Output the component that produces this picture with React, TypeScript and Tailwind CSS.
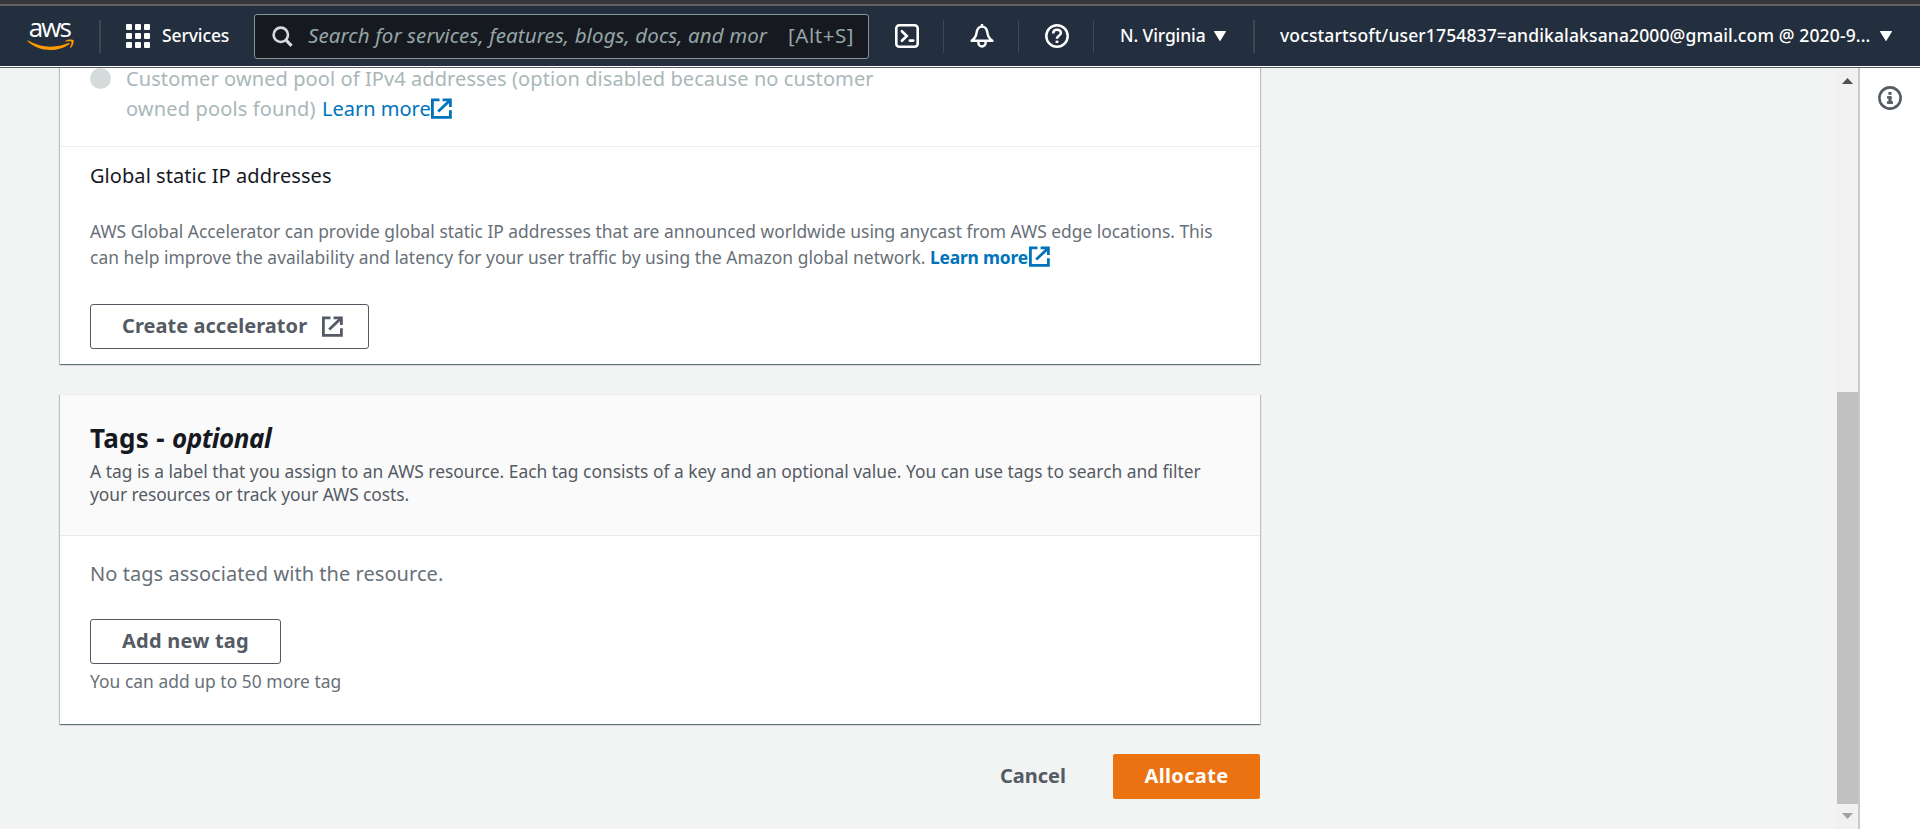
import React from 'react';

function ExternalIcon({ className = '' }: { className?: string }) {
  return (
    <svg viewBox="0 0 21 21" className={`h-[21px] w-[21px] shrink-0 ${className}`} fill="none" stroke="currentColor" strokeWidth="2.8">
      <path d="M8.5 1.9H1.4V19.4H19.4V12.2" />
      <path d="M11.6 1.9H19.4V9" />
      <path d="M7.2 13.6L18.8 2.4" />
    </svg>
  );
}

function AwsLogo() {
  return (
    <svg viewBox="0 0 47 28" className="h-[28px] w-[47px] shrink-0 overflow-visible">
      <text x="1.8" y="15" fill="#ffffff" textLength="43" fontFamily="'Open Sans', 'Noto Sans', sans-serif" fontSize="26" fontWeight="500">
        aws
      </text>
      <g transform="scale(0.1546)" fill="#ff9900">
        <path d="M273.5,143.7c-32.9,24.3-80.7,37.2-121.8,37.2c-57.6,0-109.5-21.3-148.7-56.7c-3.1-2.8-0.3-6.6,3.4-4.4c42.4,24.6,94.7,39.5,148.8,39.5c36.5,0,76.6-7.6,113.5-23.2C274.2,133.6,278.9,139.7,273.5,143.7z" />
        <path d="M287.2,128.1c-4.2-5.4-27.8-2.6-38.5-1.3c-3.2,0.4-3.7-2.4-0.8-4.5c18.8-13.2,49.7-9.4,53.3-5c3.6,4.5-1,35.4-18.6,50.2c-2.7,2.3-5.3,1.1-4.1-1.9C282.5,155.7,291.4,133.4,287.2,128.1z" />
      </g>
    </svg>
  );
}

function GridIcon() {
  return (
    <svg viewBox="0 0 24 24" className="h-6 w-6 shrink-0" fill="#ffffff">
      {[0, 9, 18].map((y) => [0, 9, 18].map((x) => <rect key={`${x}-${y}`} x={x} y={y} width="6" height="6" rx="1" />))}
    </svg>
  );
}

function Caret() {
  return (
    <svg viewBox="0 0 12 10" className="h-[10px] w-3 shrink-0">
      <path d="M0.5 0h11a.5.5 0 0 1 .4.8L6.4 9.7a.5.5 0 0 1-.8 0L.1.8A.5.5 0 0 1 .5 0z" fill="#ffffff" />
    </svg>
  );
}

function Header() {
  return (
    <header className="flex h-[60px] shrink-0 items-center bg-[#232f3e] text-[17.5px] font-medium text-white">
      <div className="flex w-[99px] pl-[27px]">
        <AwsLogo />
      </div>
      <div className="h-[33px] w-0.5 bg-[#414750]" />
      <div className="flex w-[153px] items-center pl-[25px]">
        <GridIcon />
        <span className="pb-0.5 pl-3 tracking-[-0.12px]">Services</span>
      </div>
      <div className="flex h-[45px] w-[615px] items-center overflow-hidden rounded-[3px] border border-[#879596] bg-[#16191f] pl-[17px] text-[20.5px] font-normal text-[#95a5a6]">
        <svg viewBox="0 0 21 21" className="h-[21px] w-[21px] shrink-0" fill="none" stroke="#d5dbdb" strokeWidth="2.6">
          <circle cx="8.8" cy="8.8" r="7.2" />
          <path d="M13.8 13.8L19.6 19.8" strokeWidth="3.2" />
        </svg>
        <span className="ml-[15px] w-[460px] shrink-0 pb-0.5 whitespace-nowrap tracking-[0.1px] italic">
          Search for services, features, blogs, docs, and mor
        </span>
        <span className="ml-[20px] pb-0.5 whitespace-nowrap tracking-[0.55px]">[Alt+S]</span>
      </div>
      <div className="flex w-[74px] pl-[26px]">
        <svg viewBox="0 0 24 24" className="h-6 w-6" fill="none" stroke="#ffffff" strokeWidth="2.6">
          <rect x="1.3" y="1.3" width="21.4" height="21.4" rx="3" />
          <path d="M6.9 7.2L11.8 12L6.9 16.8" strokeLinecap="round" />
          <path d="M14.8 16.6H18.2" strokeLinecap="round" />
        </svg>
      </div>
      <div className="h-[33px] w-px bg-[#414750]" />
      <div className="flex w-[74px] justify-center pl-px">
        <svg viewBox="0 0 24 24" className="h-6 w-6" fill="none" stroke="#ffffff" strokeWidth="2.4" strokeLinejoin="round">
          <path d="M1.6 16.8C4.2 15 6 12.8 6.6 8.8C7.1 5 9 2.6 12 2.6S16.9 5 17.4 8.8C18 12.8 19.8 15 22.4 16.8Z" />
          <path d="M12 0.6V2.4" strokeLinecap="round" />
          <path d="M8.4 17.4V18.9a3.6 3.6 0 0 0 7.2 0V17.4" />
        </svg>
      </div>
      <div className="h-[33px] w-px bg-[#414750]" />
      <div className="flex w-[74px] justify-center pl-[2px]">
        <svg viewBox="0 0 24 24" className="h-6 w-6" fill="none" stroke="#ffffff" strokeWidth="2.5">
          <circle cx="12" cy="12" r="10.7" />
          <path d="M8.2 9.4C8.2 7 9.8 5.8 12 5.8S15.9 7.1 15.9 9.1C15.9 11.6 12 11.6 12 14.8" />
          <path d="M12 16.6V19" strokeWidth="2.8" />
        </svg>
      </div>
      <div className="h-[33px] w-px bg-[#414750]" />
      <div className="flex w-[159px] items-center pl-[26px]">
        <span className="w-[94px] pb-0.5 tracking-[-0.12px] whitespace-nowrap">N. Virginia</span>
        <Caret />
      </div>
      <div className="h-[33px] w-0.5 bg-[#414750]" />
      <div className="flex items-center pl-[25px]">
        <span className="w-[600px] pb-0.5 tracking-[0.13px] whitespace-nowrap">vocstartsoft/user1754837=andikalaksana2000@gmail.com @ 2020-9...</span>
        <Caret />
      </div>
    </header>
  );
}

const card =
  'border-t border-[#eaeded] bg-white shadow-[0_1px_1px_0_rgba(0,28,36,0.4),1px_1px_1px_0_rgba(0,28,36,0.18),-1px_1px_1px_0_rgba(0,28,36,0.18)]';
const outlined = 'flex h-[45px] items-center rounded-[3px] border border-[#545b64] bg-white pb-px pl-[31px] text-[20px] font-bold text-[#545b64]';

export default function App() {
  return (
    <div className="flex h-[829px] w-[1920px] flex-col overflow-hidden bg-[#f2f3f3] font-['Noto_Sans','Open_Sans',sans-serif]">
      <div className="h-1 shrink-0 bg-[#35363a]" />
      <div className="h-0.5 shrink-0 bg-[#5f6062]" />
      <Header />
      <div className="h-px shrink-0 bg-white" />
      <div className="h-px shrink-0 bg-[#545b64]" />
      <div className="flex min-h-0 flex-1">
        <main className="w-[1836px] overflow-hidden pl-[60px]">
          <div className="w-[1200px]">
            <section className={`-mt-px h-[297px] ${card}`}>
              <div className="flex h-[79px] border-b border-[#eaeded] pl-[30px]">
                <div className="h-[21px] w-[21px] rounded-full bg-[#d5dbdb]" />
                <div className="-mt-1 ml-[15px] text-[20px] leading-[30px] whitespace-nowrap text-[#aab7b8]">
                  <div className="tracking-[0.085px]">Customer owned pool of IPv4 addresses (option disabled because no customer</div>
                  <div className="flex">
                    <span className="w-[196px] tracking-[0.15px]">owned pools found)</span>
                    <a className="w-[109px] text-[#0073bb]">Learn more</a>
                    <ExternalIcon className="mt-[4px] text-[#0073bb]" />
                  </div>
                </div>
              </div>
              <div className="px-[30px] pt-[14px]">
                <h3 className="text-[20px] leading-[30px] tracking-[0.06px] text-[#16191f]">Global static IP addresses</h3>
                <div className="pt-[27px] text-[17.4px] leading-[26px] whitespace-nowrap text-[#687078]">
                  <div>AWS Global Accelerator can provide global static IP addresses that are announced worldwide using anycast from AWS edge locations. This</div>
                  <div className="flex">
                    <span className="w-[840px] tracking-[0.035px]">can help improve the availability and latency for your user traffic by using the Amazon global network.</span>
                    <a className="w-[99px] font-bold tracking-[-0.18px] text-[#0073bb]">Learn more</a>
                    <ExternalIcon className="mt-[2px] text-[#0073bb]" />
                  </div>
                </div>
                <button className={`mt-[34px] w-[279px] ${outlined}`}>
                  <span className="w-[200px] text-left tracking-[0.05px]">Create accelerator</span>
                  <ExternalIcon />
                </button>
              </div>
            </section>

            <section className={`mt-[30px] h-[330px] ${card}`}>
              <div className="h-[141px] border-b border-[#eaeded] bg-[#fafafa] px-[30px] pt-[28px]">
                <h2 className="flex text-[26px] leading-[30px] font-bold text-[#16191f]">
                  <span className="w-[82px] tracking-[0.3px]">Tags -</span>
                  <span className="tracking-[-0.5px] italic">optional</span>
                </h2>
                <p className="pt-[7px] text-[17.4px] leading-[23.3px] whitespace-nowrap text-[#545b64]">
                  A tag is a label that you assign to an AWS resource. Each tag consists of a key and an optional value. You can use tags to search and filter
                  <br />
                  <span className="tracking-[-0.08px]">your resources or track your AWS costs.</span>
                </p>
              </div>
              <div className="px-[30px] pt-[23px]">
                <p className="text-[20px] leading-[30px] tracking-[0.05px] text-[#687078]">No tags associated with the resource.</p>
                <button className={`mt-[30px] w-[191px] tracking-[0.22px] ${outlined}`}>Add new tag</button>
                <p className="pt-[4px] text-[17.4px] leading-[26px] tracking-[0.04px] text-[#687078]">You can add up to 50 more tag</p>
              </div>
            </section>

            <div className="mt-[30px] flex h-[45px] items-stretch justify-end text-[20px] font-bold">
              <button className="mr-[47px] pb-px text-[#545b64]">Cancel</button>
              <button className="w-[147px] rounded-[2px] bg-[#ec7211] pb-px tracking-[0.35px] text-white">Allocate</button>
            </div>
          </div>
        </main>
        <div className="flex w-[22px] flex-col items-center bg-[#f1f1f1] pl-px">
          <svg viewBox="0 0 11 6" className="mt-[10px] h-[6px] w-[11px] shrink-0">
            <path d="M0 6L5.5 0L11 6z" fill="#505050" />
          </svg>
          <div className="mt-[308px] h-[412px] w-[21px] shrink-0 bg-[#c1c1c1]" />
          <svg viewBox="0 0 11 6" className="mt-[9px] h-[6px] w-[11px] shrink-0">
            <path d="M0 0L5.5 6L11 0z" fill="#a3a3a3" />
          </svg>
        </div>
        <aside className="flex w-[62px] justify-center border-l-2 border-[#c4cbcb] bg-white pt-[18px]">
          <svg viewBox="0 0 24 24" className="h-6 w-6" fill="none" stroke="#545b64">
            <circle cx="12" cy="12" r="10.6" strokeWidth="2.6" />
            <path d="M12 6V8.8" strokeWidth="3.2" />
            <path d="M9 11.4H13.4" strokeWidth="2.4" />
            <path d="M12 10.4V17.4" strokeWidth="3.2" />
            <path d="M9 16.6H15" strokeWidth="2.6" />
          </svg>
        </aside>
      </div>
    </div>
  );
}
